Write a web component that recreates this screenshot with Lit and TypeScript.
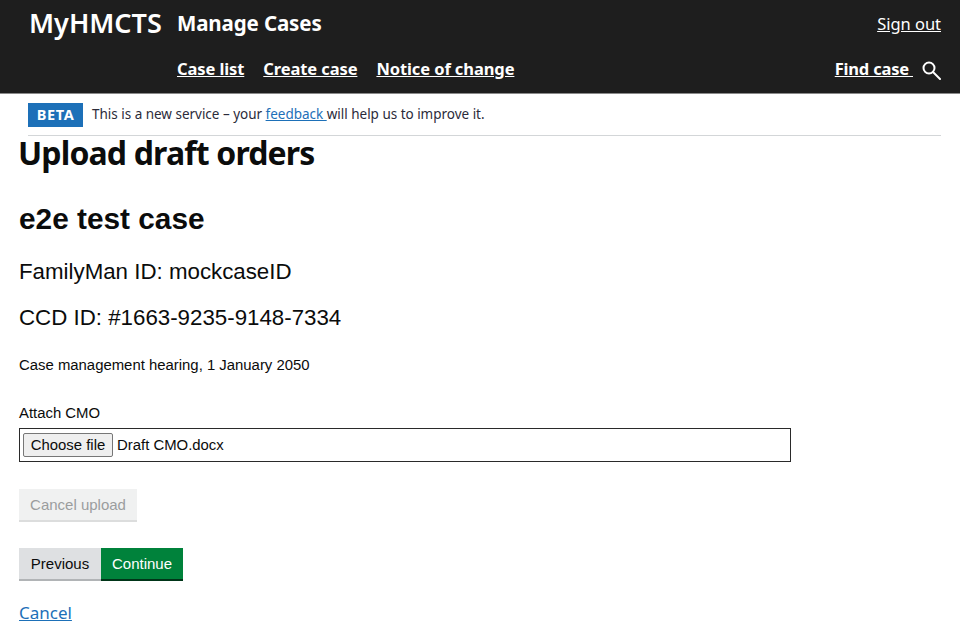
import { LitElement, html, css } from "lit";
import { customElement } from "lit/decorators.js";

@customElement("app-root")
export class AppRoot extends LitElement {
  static styles = css`
    :host { display: block; width: 960px; height: 640px; overflow: hidden; background: #fff; font-family: "Liberation Sans", Arial, sans-serif; color: #0b0c0c; }
    a { color: inherit; }
    .header { height: 93px; background: #1e1e1e; border-bottom: 1px solid #8a8a8a; color: #fff; font-family: "Noto Sans", sans-serif; box-sizing: content-box; display: flex; flex-direction: column; padding: 0 19px 0 29px; }
    .top { display: flex; align-items: center; height: 45px; }
    .logo { font-size: 27px; font-weight: 600; width: 148px; letter-spacing: 0; }
    .service { font-size: 20.5px; font-weight: 700; letter-spacing: -0.12px; }
    .signout { margin-left: auto; margin-top: 2px; font-size: 16.5px; letter-spacing: -0.03px; }
    .nav { display: flex; align-items: center; height: 46px; padding-left: 148px; font-size: 16.5px; font-weight: 700; gap: 19px; letter-spacing: -0.1px; }
    .find { margin-left: auto; display: flex; align-items: center; gap: 8px; letter-spacing: -0.2px; }
    .find a { white-space: pre; }
    .find svg { display: block; margin-top: 4px; }
    .phase { margin: 0 19px 0 28px; height: 41px; border-bottom: 1px solid #d3d6d8; display: flex; align-items: center; gap: 9px; font-family: "Noto Sans", sans-serif; font-size: 13.5px; color: #2b2b3a; letter-spacing: -0.015px; }
    .phase-text { margin-bottom: 2px; }
    .tag { background: #1d70b8; color: #fff; font-weight: 700; font-size: 14.5px; letter-spacing: 0.6px; width: 55px; height: 24px; box-sizing: border-box; padding-bottom: 2px; display: flex; align-items: center; justify-content: center; }
    .phase a { color: #1d70b8; white-space: pre; }
    .main { padding: 0 19px; }
    h1 { font-family: "Noto Sans", sans-serif; font-size: 32px; line-height: 36px; font-weight: 700; margin: -1px 0 0 -1px; letter-spacing: -0.85px; }
    h2 { font-size: 29.8px; line-height: 34px; font-weight: 700; margin: 31px 0 0; }
    .big { font-size: 22.3px; line-height: 26px; margin: 0; }
    .fm { margin-top: 23px; }
    .ccd { margin-top: 20px; }
    .hearing { font-size: 14.9px; line-height: 18px; margin: 25px 0 0; }
    label { display: block; font-size: 14.9px; line-height: 18px; margin-top: 30px; }
    .file { margin-top: 6px; width: 772px; height: 34px; box-sizing: border-box; border: 1px solid #2a2a2a; display: flex; align-items: center; padding-left: 3px; gap: 4px; font-size: 14.9px; }
    .choose { width: 90px; height: 24px; box-sizing: border-box; border: 1px solid #777; border-radius: 2px; background: #efefef; font: inherit; padding: 0; color: #0b0c0c; }
    .btn { border: 0; font: inherit; font-size: 15px; height: 33px; box-sizing: border-box; padding: 0; display: block; }
    .cancel-up { margin-top: 27px; width: 118px; background: #f0f1f1; color: #9b9d9e; border-bottom: 2px solid #dcdddd; }
    .actions { display: flex; margin-top: 26px; }
    .prev { width: 82px; background: #dee0e2; color: #0b0c0c; border-bottom: 2px solid #b1b4b6; }
    .next { width: 82px; background: #00823b; color: #fff; border-bottom: 2px solid #003518; }
    .cancel { display: block; margin-top: 21px; font-family: "Noto Sans", sans-serif; font-size: 17px; line-height: 21px; color: #1d70b8; width: fit-content; }
  `;

  render() {
    return html`
      <header class="header">
        <div class="top">
          <span class="logo">MyHMCTS</span>
          <span class="service">Manage Cases</span>
          <a class="signout" href="#">Sign out</a>
        </div>
        <nav class="nav">
          <a href="#">Case list</a>
          <a href="#">Create case</a>
          <a href="#">Notice of change</a>
          <span class="find">
            <a href="#">Find case </a>
            <svg width="20" height="20" viewBox="0 0 20 20" fill="none" stroke="#fff" stroke-width="2"><circle cx="8" cy="8" r="5.5"/><path d="M12 12L19 19" stroke-linecap="round"/></svg>
          </span>
        </nav>
      </header>
      <div class="phase">
        <span class="tag">BETA</span>
        <span class="phase-text">This is a new service – your <a href="#">feedback </a>will help us to improve it.</span>
      </div>
      <main class="main">
        <h1>Upload draft orders</h1>
        <h2>e2e test case</h2>
        <p class="big fm">FamilyMan ID: mockcaseID</p>
        <p class="big ccd">CCD ID: #1663-9235-9148-7334</p>
        <p class="hearing">Case management hearing, 1 January 2050</p>
        <label>Attach CMO</label>
        <div class="file"><button class="choose">Choose file</button><span>Draft CMO.docx</span></div>
        <button class="btn cancel-up" disabled>Cancel upload</button>
        <div class="actions">
          <button class="btn prev">Previous</button>
          <button class="btn next">Continue</button>
        </div>
        <a class="cancel" href="#">Cancel</a>
      </main>
    `;
  }
}
